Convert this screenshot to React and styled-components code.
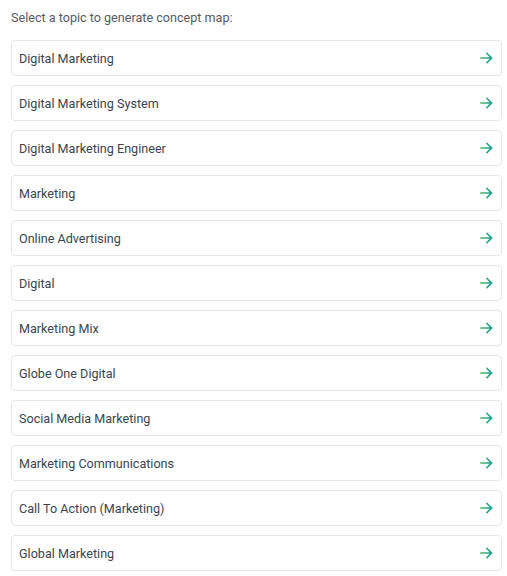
import React from "react";
import styled, { createGlobalStyle } from "styled-components";

const Global = createGlobalStyle`
  html, body { margin: 0; padding: 0; background: #fff; }
  body { font-family: Roboto, "Liberation Sans", sans-serif; }
`;

const Wrap = styled.div`
  padding: 9px 5px 0 11px;
  display: flex;
  flex-direction: column;
`;

const Heading = styled.div`
  font-size: 12.6px;
  line-height: 18px;
  color: #555b61;
  margin-bottom: 13px;
`;

const List = styled.div`
  display: flex;
  flex-direction: column;
  gap: 9px;
`;

const Item = styled.button`
  all: unset;
  box-sizing: border-box;
  height: 36px;
  display: flex;
  align-items: center;
  justify-content: space-between;
  padding: 0 8px 0 7px;
  border: 1px solid #e4e6e8;
  border-radius: 4px;
  background: #fff;
  cursor: pointer;
  font-family: Roboto, "Liberation Sans", sans-serif;
  font-size: 12.6px;
  color: #3a4550;
`;

const Arrow = () => (
  <svg width="14" height="14" viewBox="0 0 14 14" fill="none">
    <defs>
      <linearGradient id="ag" x1="0" y1="0" x2="1" y2="0">
        <stop offset="0" stopColor="#4cb56a" />
        <stop offset="1" stopColor="#159f8a" />
      </linearGradient>
    </defs>
    <path d="M2 7H12.5M8 2.5L12.5 7L8 11.5" stroke="url(#ag)" strokeWidth="1.6" strokeLinecap="square" />
  </svg>
);

const topics = [
  "Digital Marketing",
  "Digital Marketing System",
  "Digital Marketing Engineer",
  "Marketing",
  "Online Advertising",
  "Digital",
  "Marketing Mix",
  "Globe One Digital",
  "Social Media Marketing",
  "Marketing Communications",
  "Call To Action (Marketing)",
  "Global Marketing",
];

export default function App() {
  return (
    <>
      <Global />
      <Wrap>
        <Heading>Select a topic to generate concept map:</Heading>
        <List>
          {topics.map((t) => (
            <Item key={t}>
              <span>{t}</span>
              <Arrow />
            </Item>
          ))}
        </List>
      </Wrap>
    </>
  );
}
